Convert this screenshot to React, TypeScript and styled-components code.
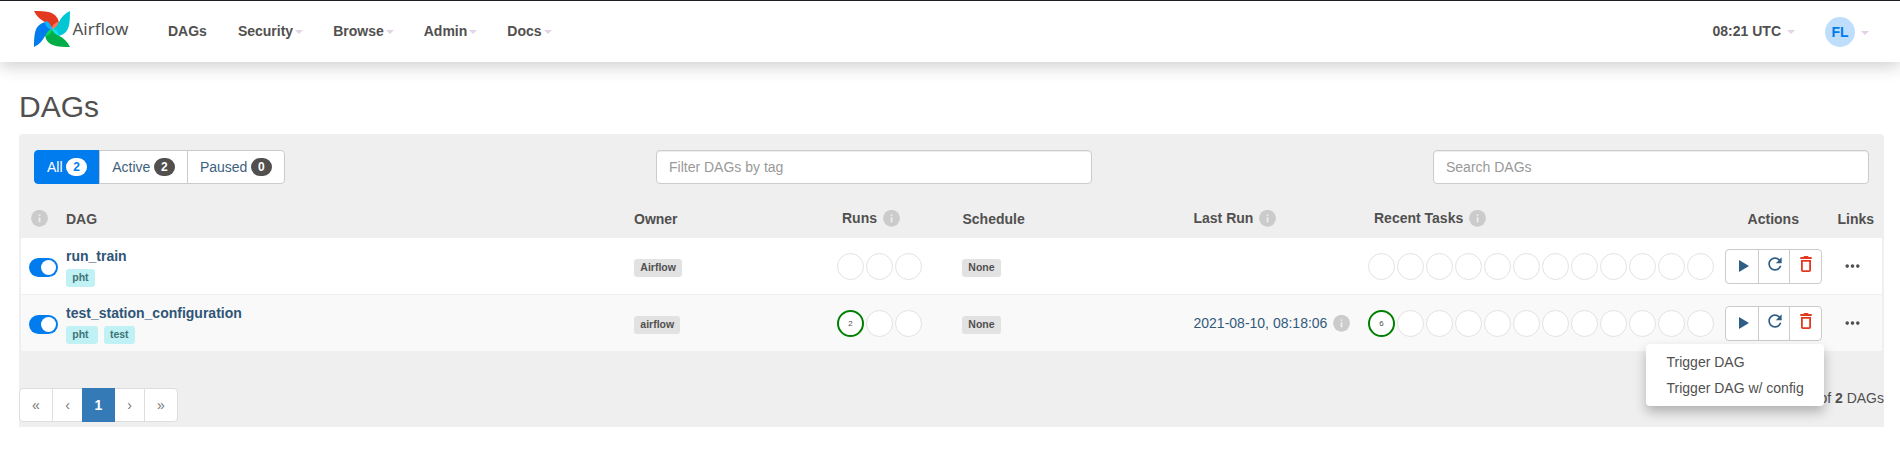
import React from 'react';
import styled, { createGlobalStyle, css } from 'styled-components';

const GlobalStyle = createGlobalStyle`
  *, *::before, *::after { box-sizing: border-box; }
  body {
    margin: 0;
    background: #fff;
    color: #51504f;
    font: 14px/20px "Liberation Sans", Arial, sans-serif;
  }
  a { text-decoration: none; color: inherit; }
`;

const Navbar = styled.header`
  display: flex;
  align-items: center;
  height: 62px;
  padding: 0 16px 0 34px;
  border-top: 1px solid #1d1d24;
  background: #fff;
  box-shadow: 0 5px 15px rgba(0, 0, 0, 0.18);
`;

const Brand = styled.a`
  display: flex;
  width: 119px;
  height: 36px;
  margin-top: -5px;
  font: 17px/36px "Noto Sans", sans-serif;
  svg { flex: none; margin-right: 2.5px; }
`;

const NavList = styled.nav`
  display: flex;
  flex: 1;
  margin-top: -1px;
`;

const NavItem = styled.a`
  display: flex;
  align-items: center;
  padding: 0 15px;
  font-weight: bold;
  &:first-child { padding-right: 16px; }
`;

const Caret = styled.i<{ $gap?: number }>`
  margin-left: ${(p) => p.$gap ?? 2}px;
  margin-top: 2px;
  border: 4px solid transparent;
  border-top-color: #e4d3e6;
  border-bottom: 0;
`;

const Clock = styled(NavItem)`
  margin-top: -1px;
`;

const UserMenu = styled(NavItem)`
  margin-top: 0;
`;

const Avatar = styled.span`
  width: 30px;
  height: 30px;
  border-radius: 50%;
  background: #bfdefb;
  color: #017cee;
  line-height: 31px;
  text-align: center;
`;

const Main = styled.main`
  padding: 0 16px 0 19px;
`;

const Title = styled.h2`
  margin: 28px 0 11px;
  font-size: 30px;
  font-weight: normal;
  line-height: 33px;
`;

const Panel = styled.section`
  height: 293px;
  border-radius: 4px 4px 0 0;
  background: #efefef;
`;

const Controls = styled.div`
  display: flex;
  padding: 16px 15px 0;
`;

const FilterGroup = styled.div`
  display: flex;
  width: 622px;
`;

const FilterButton = styled.a<{ $active?: boolean }>`
  display: flex;
  align-items: center;
  height: 34px;
  padding: 0 12px;
  border: 1px solid #cbcbcb;
  background: #fff;
  color: #3d5f7d;
  & + & { margin-left: -1px; }
  &:first-child { border-radius: 4px 0 0 4px; }
  &:last-child { border-radius: 0 4px 4px 0; }
  ${(p) => p.$active && css`
    border-color: #017cee;
    background: #017cee;
    color: #fff;
  `}
`;

const Count = styled.span<{ $inverse?: boolean }>`
  width: 21px;
  height: 18px;
  margin-left: 3.6px;
  border-radius: 10px;
  background: ${(p) => (p.$inverse ? '#fff' : '#51504f')};
  color: ${(p) => (p.$inverse ? '#017cee' : '#fff')};
  font-size: 12px;
  font-weight: bold;
  line-height: 18px;
  text-align: center;
`;

const TextInput = styled.input`
  width: 436px;
  height: 34px;
  padding: 6px 12px;
  border: 1px solid #ccc;
  border-radius: 4px;
  background: #fff;
  box-shadow: inset 0 1px 1px rgba(0, 0, 0, 0.075);
  font: inherit;
  &:last-child { margin-left: auto; }
  &::placeholder { color: #999; opacity: 1; }
`;

const Table = styled.div`
  padding: 16px 2px 0;
`;

const rowGrid = css`
  display: grid;
  grid-template-columns: 37px 568px 208px 120.5px 231px 180.5px 351px 112.5px 52.5px;
`;

const HeadRow = styled.div`
  ${rowGrid}
  height: 38px;
  font-weight: bold;
`;

const HeadCell = styled.div<{ $center?: boolean; $info?: boolean }>`
  display: flex;
  justify-content: ${(p) => (p.$center ? 'center' : 'flex-start')};
  align-items: flex-start;
  gap: 5.5px;
  padding: ${(p) => (p.$info ? 8 : 9)}px 8px 0;
  white-space: nowrap;
  &:first-child { padding-left: 9.5px; }
  svg { margin-top: 2px; }
`;

const Row = styled.div<{ $striped?: boolean }>`
  ${rowGrid}
  height: ${(p) => (p.$striped ? 56 : 57)}px;
  border-bottom: ${(p) => (p.$striped ? 0 : 1)}px solid #efefef;
  background: ${(p) => (p.$striped ? '#f9f9f9' : '#fff')};
`;

const Cell = styled.div<{ $top?: number; $left?: number }>`
  position: relative;
  padding: ${(p) => p.$top ?? 8}px 0 0 ${(p) => p.$left ?? 8}px;
  white-space: nowrap;
`;

const Switch = styled.span`
  display: flex;
  justify-content: flex-end;
  width: 29px;
  height: 19px;
  padding: 2px;
  border-radius: 10px;
  background: #017cee;
  &::after {
    content: '';
    width: 15px;
    height: 15px;
    border-radius: 50%;
    background: #fff;
  }
`;

const DagName = styled.a`
  display: block;
  height: 20px;
  color: #2f5577;
  font-weight: bold;
`;

const TagList = styled.div`
  display: flex;
  gap: 6px;
  margin-top: 3px;
`;

const Label = styled.span<{ $tag?: boolean; $wide?: boolean }>`
  display: block;
  width: fit-content;
  height: 18px;
  padding: 0 ${(p) => (p.$wide ? 9 : 6)}px 0 6.3px;
  border-radius: 3px;
  background: ${(p) => (p.$tag ? '#c0f1f4' : '#e2e2e2')};
  color: ${(p) => (p.$tag ? '#3f7477' : '#51504f')};
  font-size: 10.5px;
  font-weight: bold;
  line-height: 17px;
`;

const Circles = styled.div`
  display: flex;
  gap: 2px;
`;

const Circle = styled.span<{ $done?: boolean }>`
  width: 27px;
  height: 27px;
  border: ${(p) => (p.$done ? '2px solid #008000' : '1px solid #e2e2e2')};
  border-radius: 50%;
  background: #fff;
  font-size: 8px;
  line-height: 24px;
  text-align: center;
`;

const LastRun = styled.a`
  display: flex;
  gap: 6px;
  color: #33597b;
  svg { margin-top: 2px; }
`;

const ActionGroup = styled.div`
  display: flex;
`;

const ActionButton = styled.a<{ $danger?: boolean }>`
  display: flex;
  justify-content: center;
  width: ${(p) => (p.$danger ? 33 : 32)}px;
  height: 35px;
  border: 1px solid #cbcbcb;
  background: #fff;
  color: ${(p) => (p.$danger ? '#e43921' : '#2f5d85')};
  & + & { margin-left: -1px; }
  &:first-child { width: 34px; border-radius: 4px 0 0 4px; }
  &:last-child { border-radius: 0 4px 4px 0; }
`;

const Menu = styled.div`
  position: absolute;
  top: 49px;
  right: 5.5px;
  z-index: 2;
  width: 178px;
  height: 62px;
  padding: 5px 0;
  border-radius: 4px;
  background: #fff;
  box-shadow: 0 6px 12px rgba(0, 0, 0, 0.26);
`;

const MenuItem = styled.a`
  display: block;
  padding: 3px 20.5px;
`;

const Footer = styled.footer`
  display: flex;
  justify-content: space-between;
  padding-top: 37px;
`;

const Pagination = styled.div`
  display: flex;
`;

const PageLink = styled.a<{ $active?: boolean }>`
  width: 31px;
  height: 34px;
  padding: 6px 0;
  border: 1px solid #ddd;
  background: #fff;
  color: #777;
  text-align: center;
  & + & { margin-left: -1px; }
  &:first-child { width: 34px; border-radius: 4px 0 0 4px; }
  &:last-child { width: 34px; border-radius: 0 4px 4px 0; }
  ${(p) => p.$active && css`
    z-index: 1;
    width: 33px;
    border-color: #337ab7;
    background: #337ab7;
    color: #fff;
    font-weight: bold;
  `}
`;

const BLADES = [
  ['#e43921', '#ff7557'],
  ['#00c7d4', '#11e1ee'],
  ['#00ad46', '#04d659'],
  ['#017cee', '#0cb6ff'],
];

const Pinwheel = () => (
  <svg width="36" height="36" viewBox="0 0 100 100">
    {BLADES.map(([dark, light], i) => (
      <g key={dark} transform={`rotate(${i * 90} 50 50)`}>
        <path fill={dark} d="M0 0C35 0 50 3 60 13C66 19 68 25 69 32L50 50C48 42 42 36 31 31C17 24 6 14 0 0Z" />
        <path fill={light} d="M69 30C58 32 49 40 50 50C60 48 68 42 72 36Z" />
      </g>
    ))}
  </svg>
);

const InfoIcon = () => (
  <svg width="17" height="17" viewBox="0 0 17 17">
    <circle cx="8.5" cy="8.3" r="8.4" fill="#cbcbcb" />
    <rect x="7.7" y="4.4" width="1.7" height="1.5" fill="#efefef" />
    <rect x="7.7" y="7.3" width="1.7" height="5" fill="#efefef" />
  </svg>
);

const ActionIcon = styled.svg<{ $top: number; $left?: number }>`
  flex: none;
  margin-top: ${(p) => p.$top}px;
  margin-left: ${(p) => p.$left ?? 0}px;
`;

const PlayIcon = () => (
  <ActionIcon $top={10} $left={4} width="10" height="12" viewBox="0 0 10 12">
    <path d="M0 0L10 6L0 12Z" fill="currentColor" />
  </ActionIcon>
);

const RefreshIcon = () => (
  <ActionIcon $top={4} $left={1} width="20" height="20" viewBox="0 0 24 24">
    <path
      fill="currentColor"
      d="M17.65 6.35C16.2 4.9 14.21 4 12 4c-4.42 0-7.99 3.58-7.99 8s3.57 8 7.99 8c3.73 0 6.84-2.55 7.73-6h-2.08c-.82 2.33-3.04 4-5.65 4-3.31 0-6-2.69-6-6s2.69-6 6-6c1.66 0 3.14.69 4.22 1.78L13 11h7V4l-2.35 2.35z"
    />
  </ActionIcon>
);

const TrashIcon = () => (
  <ActionIcon $top={6} $left={1} width="12" height="16" viewBox="0 0 12 16">
    <path
      fill="currentColor"
      fillRule="evenodd"
      d="M0.3 1H3.3L4.2 0H7.8L8.7 1H11.7V2.9H0.3ZM1 4H11V14.2Q11 16 9.2 16H2.8Q1 16 1 14.2ZM2.8 5.8V14.2H9.2V5.8Z"
    />
  </ActionIcon>
);

const DotsIcon = () => (
  <svg width="15" height="5" viewBox="0 0 15 5">
    {[2.2, 7.5, 12.8].map((cx) => (
      <circle key={cx} cx={cx} cy="2.1" r="1.8" fill="#51504f" />
    ))}
  </svg>
);

const StateCircles = ({ total, first }: { total: number; first?: number }) => (
  <Circles>
    {Array.from({ length: total }, (_, i) => (
      <Circle key={i} $done={i === 0 && first !== undefined}>
        {i === 0 ? first : null}
      </Circle>
    ))}
  </Circles>
);

const LinksCell = styled(Cell)`
  svg { display: block; }
`;

type Dag = {
  name: string;
  tags: string[];
  owner: string;
  runs?: number;
  tasks?: number;
  lastRun?: string;
  menuOpen?: boolean;
};

const DAGS: Dag[] = [
  { name: 'run_train', tags: ['pht'], owner: 'Airflow' },
  {
    name: 'test_station_configuration',
    tags: ['pht', 'test'],
    owner: 'airflow',
    runs: 2,
    tasks: 6,
    lastRun: '2021-08-10, 08:18:06',
    menuOpen: true,
  },
];

const DagRow = ({ dag, striped }: { dag: Dag; striped: boolean }) => (
  <Row $striped={striped}>
    <Cell $top={20}><Switch /></Cell>
    <Cell>
      <DagName>{dag.name}</DagName>
      <TagList>
        {dag.tags.map((tag, i) => (
          <Label key={tag} $tag $wide={i < dag.tags.length - 1}>{tag}</Label>
        ))}
      </TagList>
    </Cell>
    <Cell $top={21}><Label>{dag.owner}</Label></Cell>
    <Cell $top={15} $left={3}><StateCircles total={3} first={dag.runs} /></Cell>
    <Cell $top={21} $left={7.5}><Label>None</Label></Cell>
    <Cell $top={18}>
      {dag.lastRun && <LastRun>{dag.lastRun}<InfoIcon /></LastRun>}
    </Cell>
    <Cell $top={15} $left={2}><StateCircles total={12} first={dag.tasks} /></Cell>
    <Cell $top={11}>
      <ActionGroup>
        <ActionButton><PlayIcon /></ActionButton>
        <ActionButton><RefreshIcon /></ActionButton>
        <ActionButton $danger><TrashIcon /></ActionButton>
      </ActionGroup>
      {dag.menuOpen && (
        <Menu>
          <MenuItem>Trigger DAG</MenuItem>
          <MenuItem>Trigger DAG w/ config</MenuItem>
        </Menu>
      )}
    </Cell>
    <LinksCell $top={26} $left={15}><DotsIcon /></LinksCell>
  </Row>
);

export default function App() {
  return (
    <>
      <GlobalStyle />
      <Navbar>
        <Brand><Pinwheel />Airflow</Brand>
        <NavList>
          <NavItem>DAGs</NavItem>
          {['Security', 'Browse', 'Admin', 'Docs'].map((item) => (
            <NavItem key={item}>{item}<Caret /></NavItem>
          ))}
        </NavList>
        <Clock>08:21 UTC<Caret $gap={6} /></Clock>
        <UserMenu><Avatar>FL</Avatar><Caret $gap={6} /></UserMenu>
      </Navbar>
      <Main>
        <Title>DAGs</Title>
        <Panel>
          <Controls>
            <FilterGroup>
              <FilterButton $active>All<Count $inverse>2</Count></FilterButton>
              <FilterButton>Active<Count>2</Count></FilterButton>
              <FilterButton>Paused<Count>0</Count></FilterButton>
            </FilterGroup>
            <TextInput placeholder="Filter DAGs by tag" />
            <TextInput placeholder="Search DAGs" />
          </Controls>
          <Table>
            <HeadRow>
              <HeadCell $info><InfoIcon /></HeadCell>
              <HeadCell>DAG</HeadCell>
              <HeadCell>Owner</HeadCell>
              <HeadCell $info>Runs<InfoIcon /></HeadCell>
              <HeadCell>Schedule</HeadCell>
              <HeadCell $info>Last Run<InfoIcon /></HeadCell>
              <HeadCell $info>Recent Tasks<InfoIcon /></HeadCell>
              <HeadCell $center>Actions</HeadCell>
              <HeadCell>Links</HeadCell>
            </HeadRow>
            {DAGS.map((dag, i) => (
              <DagRow key={dag.name} dag={dag} striped={i % 2 === 1} />
            ))}
          </Table>
          <Footer>
            <Pagination>
              <PageLink>«</PageLink>
              <PageLink>‹</PageLink>
              <PageLink $active>1</PageLink>
              <PageLink>›</PageLink>
              <PageLink>»</PageLink>
            </Pagination>
            <div>of <b>2</b> DAGs</div>
          </Footer>
        </Panel>
      </Main>
    </>
  );
}
